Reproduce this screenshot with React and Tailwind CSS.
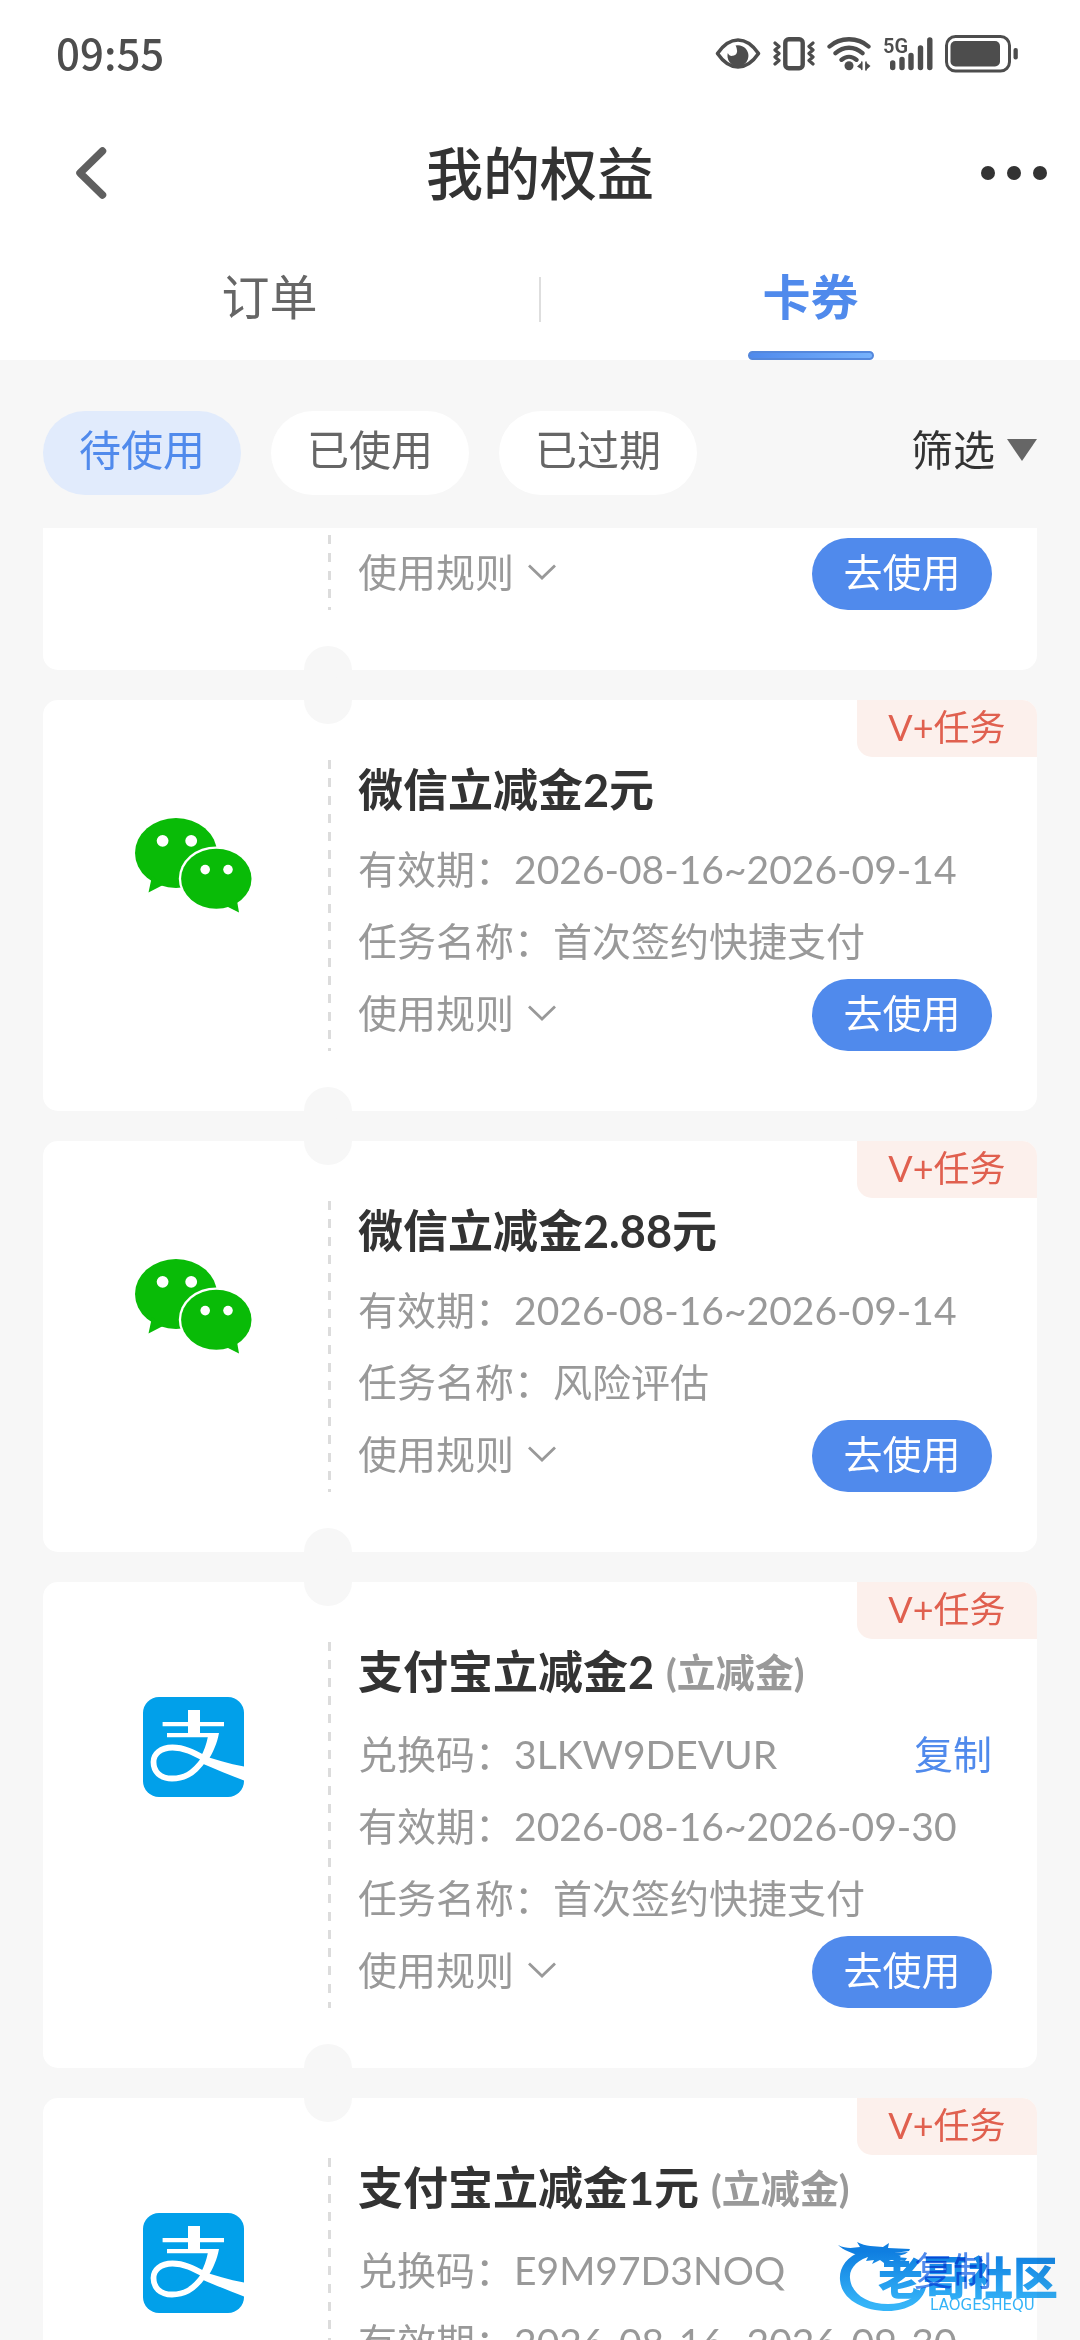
import { useState } from 'react';

const FILTERS = ['待使用', '已使用', '已过期'];

const COUPONS = [
  { id: 1, partial: true, rows: [] },
  {
    id: 2,
    brand: 'wechat',
    title: '微信立减金2元',
    rows: [['有效期：', '2026-08-16~2026-09-14'], ['任务名称：', '首次签约快捷支付']],
  },
  {
    id: 3,
    brand: 'wechat',
    title: '微信立减金2.88元',
    rows: [['有效期：', '2026-08-16~2026-09-14'], ['任务名称：', '风险评估']],
  },
  {
    id: 4,
    brand: 'alipay',
    title: '支付宝立减金2',
    kind: '(立减金)',
    code: '3LKW9DEVUR',
    rows: [['有效期：', '2026-08-16~2026-09-30'], ['任务名称：', '首次签约快捷支付']],
  },
  {
    id: 5,
    brand: 'alipay',
    title: '支付宝立减金1元',
    kind: '(立减金)',
    code: 'E9M97D3NOQ',
    rows: [['有效期：', '2026-08-16~2026-09-30']],
    cut: true,
  },
];

function StatusBar() {
  return (
    <div className="flex h-[108px] items-center justify-between pl-14 pr-[62px] text-[#4d4d4d]">
      <span className="pb-1 font-['Noto_Sans_CJK_SC'] text-[42px] leading-none font-medium">09:55</span>
      <div className="flex items-center gap-3">
        <svg width="46" height="38" viewBox="0 0 46 38" fill="none">
          <path d="M2.5 18.5C9 9 16 5 23 5s14 4 20.500 13.500C37 28 30 32 23 32S9 28 2.500 18.500Z" stroke="currentColor" strokeWidth="3.600" strokeLinejoin="round" />
          <path d="M20.500 10.500a10.500 10.500 0 1 1-7.700 7.500c1 2.500 3 3.300 5 2.800 3.600-.6 4.600-3.300 4.200-5.600-.2-2-.8-3.700-1.500-4.700Z" fill="currentColor" />
        </svg>
        <svg width="42" height="38" viewBox="0 0 42 38" fill="none" stroke="currentColor">
          <rect x="12.300" y="4.300" width="17.400" height="29" rx="3.500" strokeWidth="4.400" />
          <path d="M2 8l4 3.500L2 15l4 3.500L2 22l4 3.500L2 29M40 8l-4 3.500 4 3.500-4 3.500 4 3.500-4 3.500 4 3.500" strokeWidth="3.200" strokeLinejoin="round" strokeLinecap="round" />
        </svg>
        <svg width="44" height="38" viewBox="0 0 44 38" fill="none" stroke="currentColor" strokeWidth="4.300" strokeLinecap="round">
          <path d="M2.500 11.500C13 1.800 31 1.800 41.500 11.500M8.500 18.200c8-7.300 19-7.300 27 0M14.500 24.800c4.500-4 10.500-4 15 0" />
          <circle cx="22" cy="30.800" r="4.500" fill="currentColor" stroke="none" />
          <path d="M30 31.500l5-4.500v7.500zM43.500 31l-5 4.500V27z" fill="currentColor" stroke="none" />
          <path d="M34.800 27v7.500M39 27v8" strokeWidth="1.500" />
        </svg>
        <svg width="50" height="38" viewBox="0 0 50 38">
          <g stroke="currentColor" strokeWidth="5.400" strokeLinecap="round">
            <path d="M9.700 28v4.500M19 24.500v8M28 20.500v12M37.500 13v19.500M46.800 5v27.500" />
          </g>
          <text x="0" y="18" fontSize="20" fontFamily="Roboto, sans-serif" fontWeight="600" fill="currentColor">5G</text>
        </svg>
        <svg width="73" height="38" viewBox="0 0 73 38">
          <rect x="1.500" y="1.500" width="63" height="34.500" rx="9" fill="none" stroke="currentColor" strokeWidth="3" />
          <rect x="5.500" y="6" width="49.500" height="25.500" rx="5" fill="currentColor" />
          <rect x="68.500" y="13" width="4.300" height="11.500" rx="2" fill="currentColor" />
        </svg>
      </div>
    </div>
  );
}

function WechatLogo() {
  return (
    <svg width="117" height="95" viewBox="0 0 117 95" fill="#09bb07">
      <ellipse cx="41" cy="35" rx="41" ry="35" />
      <path d="M17 58l-3.500 16.500L28 67z" />
      <ellipse cx="81.300" cy="60.700" rx="37.500" ry="32.300" fill="#fff" />
      <ellipse cx="81.300" cy="60.700" rx="35.200" ry="30" />
      <path d="M92 88.500l12 6-2.200-13z" />
      <g fill="#fff">
        <circle cx="27.600" cy="22.800" r="5.900" />
        <circle cx="56.200" cy="22.800" r="5.900" />
        <circle cx="70.200" cy="51.600" r="4.800" />
        <circle cx="93" cy="51.600" r="4.800" />
      </g>
    </svg>
  );
}

function AlipayLogo() {
  return (
    <svg width="101" height="100" viewBox="0 0 101 100">
      <rect width="101" height="100" rx="16" fill="#01a0ea" />
      <g fill="#fff">
        <path d="M45 13h12v24H45z" />
        <path d="M19.600 25H81v4.200H19.600z" />
        <path d="M24 36h52c-1.600 9.500-6 20-11.500 28.300l-7-4.300c3.500-6 6-13 7.300-19.800H24z" />
        <path d="M57 57.500C71 62 86 67 101 69.500v14C88 78.500 74 73 58 66z" />
      </g>
      <path d="M61 62C50 78 40 81.500 29 81.500c-12 0-18.500-7-18.500-16.500 0-8 7-14.500 19-14.500 11.500 0 21 5 32 11" fill="none" stroke="#fff" strokeWidth="5.800" />
    </svg>
  );
}

function Notches() {
  return (
    <>
      <span className="absolute -top-6 left-[261px] size-12 rounded-full bg-[#f7f7f7]" />
      <span className="absolute -bottom-6 left-[261px] size-12 rounded-full bg-[#f7f7f7]" />
    </>
  );
}

function ActionRow() {
  return (
    <div className="flex h-[72px] items-center justify-between">
      <button type="button" className="flex items-center gap-[14px] pb-1">
        使用规则
        <svg width="28" height="16" viewBox="0 0 28 16" fill="none" stroke="#999" strokeWidth="2.800">
          <path d="M1 1.500l13 12.500L27 1.500" />
        </svg>
      </button>
      <button type="button" className="h-[72px] w-[180px] rounded-full bg-[#508aec] pb-1 text-white">去使用</button>
    </div>
  );
}

const DASHES = 'w-[3px] shrink-0 bg-[repeating-linear-gradient(to_bottom,#dcdcdc_0_9px,transparent_9px_18px)]';

function CouponCard({ coupon }) {
  const { partial, cut, brand, title, kind, code, rows } = coupon;

  // top ticket is scrolled under the filter bar, only its footer shows
  if (partial) {
    return (
      <article className="relative flex rounded-b-[15px] bg-white pt-[7px] pb-[60px] text-[39px] text-[#999]">
        <div className="w-[285px] shrink-0" />
        <div className={DASHES} />
        <div className="flex-1 pt-[3px] pr-[45px] pl-[27px]">
          <ActionRow />
        </div>
        <span className="absolute -bottom-6 left-[261px] size-12 rounded-full bg-[#f7f7f7]" />
      </article>
    );
  }

  return (
    <article className="relative flex rounded-[15px] bg-white py-[60px] text-[39px] text-[#999]">
      <Notches />
      <span className="absolute top-0 right-0 flex h-[57px] w-[180px] items-center justify-center rounded-tr-[15px] rounded-bl-[15px] bg-[#fcf0ec] pb-1 text-[36px] text-[#e0604f]">
        V+任务
      </span>
      <div className="w-[285px] shrink-0 pt-[30px] pr-[60px] pl-[75px]">
        <div className="flex h-[150px] items-center justify-center">
          {brand === 'wechat' ? <WechatLogo /> : <AlipayLogo />}
        </div>
      </div>
      <div className={DASHES} />
      <div className="min-w-0 flex-1 pr-[45px] pl-[27px]">
        <h2 className={`flex items-center leading-[60px] font-bold ${kind ? 'mb-[18px]' : 'mb-[15px]'}`}>
          <span className="text-[45px] text-[#333]">{title}</span>
          {kind && <span className="ml-3">{kind}</span>}
        </h2>
        {code && (
          <div className="flex h-[72px] items-center justify-between pb-1">
            <p>兑换码：{code}</p>
            <button type="button" className="text-[#508aec]">复制</button>
          </div>
        )}
        {rows.map(([label, value]) => (
          <p key={label} className="h-[72px] leading-[68px] whitespace-nowrap">{label}{value}</p>
        ))}
        {!cut && <ActionRow />}
      </div>
    </article>
  );
}

function CommunityMark() {
  return (
    <svg className="absolute right-4 bottom-6 mix-blend-multiply" width="226" height="76" viewBox="0 0 226 76">
      <defs>
        <linearGradient id="mark" x1="0" y1="0" x2="0" y2="76" gradientUnits="userSpaceOnUse">
          <stop offset="0.15" stopColor="#0f7ee0" />
          <stop offset="0.85" stopColor="#35b4f8" />
        </linearGradient>
      </defs>
      <g fill="url(#mark)">
        <path d="M24 11C8 17 1 28 2 40c1 18 21 31 48 31 19 0 35-9 38-24l-5 1c-5 10-17 16-33 16-22 0-37-11-38-26-1-10 8-19 22-22z" />
        <path d="M0 5c8 4 15 3 22 2l-3-5c9 5 18 4 26 5l6-4-1 5 22 1-1 2-15 2 14-1-3 2-10 3 12 1-2 3-14-1-7 3-4-3-8 4 2-4-8 1 2-4-8-1C14 13 5 10 0 5z" />
        <text x="40" y="55" fontSize="45" fontWeight="900" fontFamily="'Noto Sans CJK SC', sans-serif">老哥社区</text>
        <text x="92" y="70" fontSize="15" fontFamily="'DejaVu Sans', sans-serif">LAOGESHEQU</text>
      </g>
    </svg>
  );
}

export default function App() {
  const [active, setActive] = useState(FILTERS[0]);

  return (
    <div lang="zh-CN" className="relative flex h-screen flex-col overflow-hidden bg-[#f7f7f7] font-['Lato','Noto_Sans_CJK_SC',sans-serif] leading-none">
      <header className="shrink-0 bg-white">
        <StatusBar />
        <div className="flex h-[130px] items-center pr-[33px] pl-[75px]">
          <div className="flex flex-1">
            <button type="button" aria-label="返回">
              <svg width="32" height="52" viewBox="0 0 32 52" fill="none" stroke="#5f5f5f" strokeWidth="7.500" strokeLinecap="round" strokeLinejoin="round">
                <path d="M27.500 4L5 26l22.500 22" />
              </svg>
            </button>
          </div>
          <h1 className="pr-[42px] text-[57px] font-medium text-[#333]">我的权益</h1>
          <div className="flex flex-1 justify-end">
            <button type="button" aria-label="更多" className="flex w-[66px] justify-between">
              <span className="size-[14px] rounded-full bg-[#333]" />
              <span className="size-[14px] rounded-full bg-[#333]" />
              <span className="size-[14px] rounded-full bg-[#333]" />
            </button>
          </div>
        </div>
        <nav className="flex h-[122px] items-center text-[48px]">
          <button type="button" className="h-full flex-1 pb-1 text-[#666]">订单</button>
          <span className="h-[45px] w-[2px] bg-[#dedede]" />
          <button type="button" className="relative h-full flex-1 pb-1 font-bold text-[#508aec]">
            卡券
            <span className="absolute bottom-0 left-1/2 h-[9px] w-[126px] -translate-x-1/2 rounded-full border-2 border-[#5588dc] bg-linear-to-r from-[#508aec] to-[#77b2fc]" />
          </button>
        </nav>
      </header>

      <div className="flex shrink-0 items-center justify-between px-[43px] pt-[51px] pb-[33px] text-[42px]">
        <div className="flex gap-[30px]">
          {FILTERS.map(f => (
            <button
              key={f}
              type="button"
              onClick={() => setActive(f)}
              className={`h-[84px] w-[198px] rounded-full pb-1.5 ${f === active ? 'bg-[#e1ebfc] text-[#508aec]' : 'bg-white text-[#666]'}`}
            >
              {f}
            </button>
          ))}
        </div>
        <button type="button" className="flex items-center gap-3 pb-1.5 text-[#333]">
          筛选
          <svg width="30" height="22" viewBox="0 0 30 22" fill="#666"><path d="M0 0h30L15 22z" /></svg>
        </button>
      </div>

      <main className="flex min-h-0 flex-1 flex-col gap-[30px] overflow-hidden px-[43px] *:shrink-0">
        {COUPONS.map(c => <CouponCard key={c.id} coupon={c} />)}
      </main>

      <CommunityMark />
    </div>
  );
}
